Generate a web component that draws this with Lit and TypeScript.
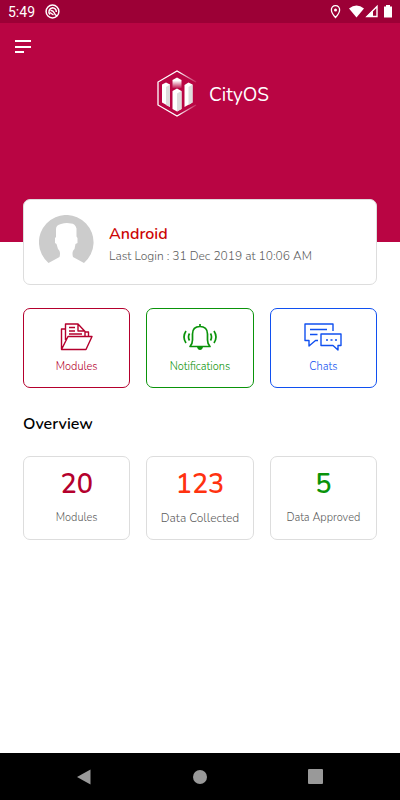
import { LitElement, html, css, svg } from "lit";
import { customElement } from "lit/decorators.js";

const moduleIcon = svg`<svg class="icon" viewBox="0 0 34 28" aria-hidden="true">
  <path d="M1.5 26V6H5.5M5.5 17V1H18L25 8.5V13M18 1V8H25M25 9H28.5V13M1.5 26.5L8 13.5H32L26 26.5Z"/>
  <path d="M9 4.5H15M9 8H15M9 11H22"/></svg>`;

const bellIcon = svg`<svg class="icon bell" viewBox="0 0 34 28" aria-hidden="true">
  <path d="M17 1V3M7 23.500H27C25 21.500 24.500 20 24.500 17V11C24.500 6 21.500 3.500 17 3.500S9.500 6 9.500 11V17C9.500 20 9 21.500 7 23.500Z"/>
  <path class="solid" d="M14 24H20C19.500 26 18.500 27 17 27S14.500 26 14 24Z"/>
  <path d="M6.500 10.500Q4.500 14 6.500 17.500M3 8Q-1 14 3 20M27.500 10.500Q29.500 14 27.500 17.500M31 8Q35 14 31 20"/></svg>`;

const chatIcon = svg`<svg class="icon chat" viewBox="0 0 38 28" aria-hidden="true">
  <path d="M29 8V1H1V17.500H5V23L11.500 17.500H14M17 11H37V22.500H34V27L29 22.500H17Z"/>
  <path d="M6 6.500H23M6 11.500H13.500"/>
  <path class="dots" d="M22 17H24M26.500 17H28.500M31 17H33"/></svg>`;

const actions = [
  { label: "Modules", tone: "crimson", icon: moduleIcon },
  { label: "Notifications", tone: "green", icon: bellIcon },
  { label: "Chats", tone: "blue", icon: chatIcon },
];

const stats = [
  { value: 20, label: "Modules", tone: "crimson", size: "" },
  { value: 123, label: "Data Collected", tone: "orange", size: "large" },
  { value: 5, label: "Data Approved", tone: "green", size: "" },
];

@customElement("app-root")
export class AppRoot extends LitElement {
  static styles = css`
    :host {
      display: flex;
      flex-direction: column;
      min-height: 100vh;
      background: #fff;
      font-family: Nunito, Lato, sans-serif;
      font-size: 12px;
      font-weight: 300;
      line-height: 16px;
      color: #5c5c5c;
    }
    * { box-sizing: border-box; }
    h1, h2, p, dl, dd { margin: 0; }
    button {
      font: inherit;
      color: inherit;
      background: none;
      border: 0;
      padding: 0;
      cursor: pointer;
    }
    svg { display: block; }
    .status {
      display: flex;
      align-items: center;
      justify-content: space-between;
      height: 23px;
      padding: 0 7px 0 8px;
      background: #9c0036;
      color: #fff;
      font-family: Roboto, sans-serif;
      font-size: 14px;
      font-weight: 400;
    }
    .group { display: flex; align-items: center; }
    .left { gap: 10px; }
    .hero {
      background: #b90543;
      padding: 16px 15px 124px;
    }
    .menu { display: block; width: 17px; height: 15px; }
    .brand {
      display: flex;
      align-items: center;
      justify-content: center;
      gap: 12px;
      margin: 16px 0 0 26px;
      color: #fff;
    }
    .brand h1 { padding-top: 2px; font-size: 19px; line-height: 24px; font-weight: 400; }
    main { flex: 1; padding: 0 23px 24px; }
    .profile {
      display: flex;
      align-items: center;
      gap: 15px;
      margin-top: -43px;
      height: 86px;
      padding: 0 15px;
      background: #fff;
      border: 1px solid #ddd;
      border-radius: 7px;
    }
    .profile div { padding-top: 3px; }
    .profile h2 {
      font-size: 16px;
      line-height: 20px;
      font-weight: 600;
      margin-bottom: 4px;
      color: #cc0505;
    }
    .cards {
      display: grid;
      grid-template-columns: repeat(3, 1fr);
      gap: 16px;
      text-align: center;
    }
    .actions { margin-top: 23px; }
    .card {
      display: flex;
      flex-direction: column;
      align-items: center;
      border: 1px solid currentColor;
      border-radius: 7px;
      font-size: 11px;
    }
    .action { height: 80px; padding-top: 14px; gap: 8px; }
    .crimson { color: #b4002d; }
    .green { color: #0a930a; }
    .blue { color: #1050f0; }
    .orange { color: #ff3210; }
    .icon {
      width: 34px;
      height: 28px;
      fill: none;
      stroke: currentColor;
      stroke-width: 1.4;
      stroke-linejoin: round;
    }
    .chat { width: 38px; }
    .bell { stroke-width: 1.7; }
    .solid { fill: currentColor; stroke: none; }
    .dots { stroke-width: 1.6; }
    .overview { margin: 26px 0 22px; font-size: 16px; line-height: 20px; font-weight: 600; color: #000; }
    .stat { height: 84px; padding-top: 12px; gap: 9px; border-color: #ddd; flex-direction: column-reverse; justify-content: flex-end; }
    .large { font-size: 12px; }
    .value { font-size: 27px; line-height: 32px; font-weight: 600; }
    nav {
      display: flex;
      align-items: center;
      justify-content: space-around;
      height: 47px;
      padding: 0 26px;
      background: #000;
    }
    .key { width: 16px; height: 16px; fill: #999; }
  `;

  render() {
    return html`
      <div class="status">
        <div class="group left">
          <span>5:49</span>
          <svg width="15" height="15" viewBox="0 0 15 15" fill="none" stroke="#fff" stroke-width="1.500" aria-hidden="true">
            <circle cx="7.500" cy="7.500" r="6.400"/><path d="M5 10.500A4 4 0 0 1 7.500 3.800A4 4 0 0 1 11.300 8"/><path d="M5.500 6.500Q8 6 9 8.500T12 12M5 8.500L8.500 11"/>
          </svg>
        </div>
        <svg width="64" height="15" viewBox="0 0 64 15" aria-hidden="true">
          <path d="M6.500 1.600A4 4 0 0 0 2.400 6C2.400 9 6.500 13.500 6.500 13.500S10.600 9 10.600 6A4 4 0 0 0 6.500 1.600Z" fill="none" stroke="#fff" stroke-width="1.300"/>
          <circle cx="6.500" cy="6" r="1.500" fill="#fff"/>
          <path d="M20 4.500Q27.500-1.500 35 4.500L27.500 13.500Z" fill="#fff"/>
          <path d="M48 2.500V12.500H38Z" fill="none" stroke="#fff" stroke-width="1.400"/><path d="M37 13L44 6V13Z" fill="#fff"/>
          <path d="M55 2.500H57V1H61V2.500H63V13.500H55Z" fill="#fff"/>
        </svg>
      </div>
      <header class="hero">
        <button class="menu" aria-label="Open menu">
          <svg width="17" height="15" viewBox="0 0 17 15" fill="#fff"><path d="M0 1H16V3H0ZM0 7H16V9H0ZM0 12H9V14H0Z"/></svg>
        </button>
        <div class="brand">
          <svg width="40" height="48" viewBox="0 0 40 48" aria-hidden="true">
            <defs>
              <linearGradient id="edge"><stop offset=".55" stop-color="#fff"/><stop offset="1" stop-color="#fff" stop-opacity=".15"/></linearGradient>
              <linearGradient id="drop" x2="0" y2="1"><stop offset=".3" stop-color="#fff"/><stop offset="1" stop-color="#fff" stop-opacity=".1"/></linearGradient>
            </defs>
            <path d="M39 12L20 1L1 12V35L20 46L39 35" fill="none" stroke="url(#edge)" stroke-width="1.300"/>
            <path d="M5 14.500L9 12.500L13 14.500V37L5 32.500Z" fill="#fff"/><path d="M9 17L13 14.500V37L9 35Z" fill="#ddd"/>
            <path d="M27.500 15L31.500 12.500L35.500 14.500V32.500L27.500 37Z" fill="#fff"/><path d="M31.500 17L35.500 14.500V32.500L31.500 35Z" fill="#ddd"/>
            <path d="M15.500 10L20 7.500L24.500 10V18H15.500Z" fill="url(#drop)"/>
            <path d="M15.500 21L20 18.500L24.500 21V39L20 41.500L15.500 39Z" fill="#fff"/><path d="M20 23.500L24.500 21V39L20 41.500Z" fill="#ddd"/>
          </svg>
          <h1>CityOS</h1>
        </div>
      </header>
      <main>
        <section class="profile">
          <svg width="55" height="55" viewBox="0 0 55 55" role="img" aria-label="Profile picture">
            <path d="M9.500 48A27.300 27.300 0 1 1 45 48L34 42C33 38 33.500 36 35.500 34L36.500 29L38.500 28V23L37.500 21.500V13.500Q36 8.500 32 8.500Q27 7.500 22 9Q17 10 17 14V22L16 23V28L17.500 29L19 34C21 36 21.500 38 20.500 42Z" fill="#ccc"/>
          </svg>
          <div>
            <h2>Android</h2>
            <p>Last Login : 31 Dec 2019 at 10:06 AM</p>
          </div>
        </section>
        <div class="cards actions">
          ${actions.map((a) => html`<button class="card action ${a.tone}">${a.icon}<span>${a.label}</span></button>`)}
        </div>
        <h2 class="overview">Overview</h2>
        <dl class="cards">
          ${stats.map((s) => html`<div class="card stat ${s.size}"><dt>${s.label}</dt><dd class="value ${s.tone}">${s.value}</dd></div>`)}
        </dl>
      </main>
      <nav aria-label="System">
        <button aria-label="Back"><svg class="key" viewBox="0 0 16 16"><path d="M1 8L14.500 .5V15.500Z"/></svg></button>
        <button aria-label="Home"><svg class="key" viewBox="0 0 16 16"><circle cx="8" cy="8" r="7"/></svg></button>
        <button aria-label="Recent apps"><svg class="key" viewBox="0 0 16 16"><rect x="0" y="0" width="15" height="15" rx="1"/></svg></button>
      </nav>
    `;
  }
}
